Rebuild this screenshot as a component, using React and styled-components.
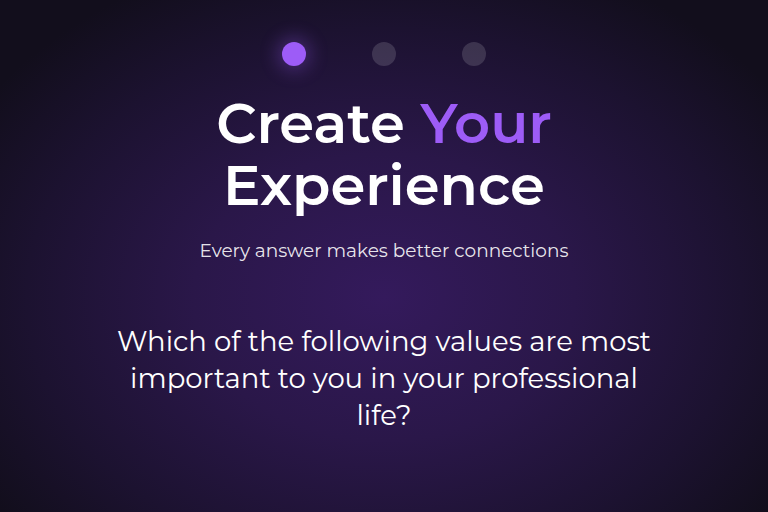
import React from "react";
import styled, { createGlobalStyle } from "styled-components";

const Global = createGlobalStyle`
  html, body { margin: 0; padding: 0; }
  body { background: #130f1f; font-family: Montserrat, "Open Sans", sans-serif; }
  * { box-sizing: border-box; }
`;

const Page = styled.div`
  width: 100%;
  min-height: 100vh;
  height: 512px;
  overflow: hidden;
  display: flex;
  flex-direction: column;
  align-items: center;
  padding-top: 42px;
  background: radial-gradient(ellipse 62% 70% at 50% 58%, #341a5c 0%, #2a1749 40%, #1c1230 75%, #120e1c 100%);
  color: #fff;
  text-align: center;
`;

const Dots = styled.div`
  display: flex;
  gap: 66px;
`;

const Dot = styled.span`
  width: 24px;
  height: 24px;
  border-radius: 50%;
  background: ${(p) => (p.$active ? "#9d5cf7" : "rgba(255,255,255,0.14)")};
  box-shadow: ${(p) => (p.$active ? "0 0 18px 5px rgba(157,92,247,0.3)" : "none")};
`;

const Title = styled.h1`
  margin: 26px 0 0;
  font-size: 56px;
  line-height: 62px;
  font-weight: 600;
  letter-spacing: 0;
`;

const Accent = styled.span`
  color: #9d5cf7;
`;

const Subtitle = styled.p`
  margin: 23px 0 0;
  font-size: 18.5px;
  line-height: 24px;
  font-weight: 400;
  color: rgba(255,255,255,0.9);
`;

const Question = styled.h2`
  margin: 60px 0 0;
  max-width: 552px;
  font-size: 27.5px;
  line-height: 37px;
  font-weight: 400;
`;

export default function App() {
  return (
    <>
      <Global />
      <Page>
        <Dots>
          <Dot $active />
          <Dot />
          <Dot />
        </Dots>
        <Title>
          Create <Accent>Your</Accent>
          <br />
          Experience
        </Title>
        <Subtitle>Every answer makes better connections</Subtitle>
        <Question>
          Which of the following values are most important to you in your professional life?
        </Question>
      </Page>
    </>
  );
}
